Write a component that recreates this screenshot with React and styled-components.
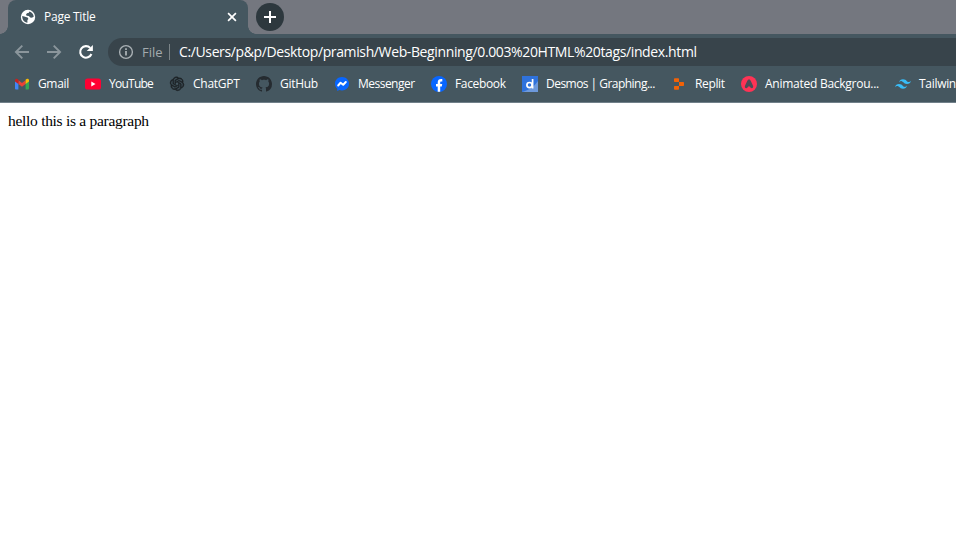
import React from "react";
import styled, { createGlobalStyle } from "styled-components";

const GlobalStyle = createGlobalStyle`
  html, body { margin: 0; padding: 0; background: #fff; overflow: hidden; }
  * { box-sizing: border-box; }
`;

const Window = styled.div`
  width: 100%;
  height: 100vh;
  display: flex;
  flex-direction: column;
  overflow: hidden;
  background: #fff;
  color: #fff;
  font-family: "Open Sans", "Noto Sans", sans-serif;
  font-size: 12px;
`;

const TabStrip = styled.div`
  flex: none;
  height: 34px;
  display: flex;
  align-items: stretch;
  background: #74777f;
`;

const FrameEdge = styled.div`
  width: 8px;
  background: radial-gradient(circle at 0 0, transparent 7.5px, #455760 8px) 0 100% / 8px 8px no-repeat;
  transform: ${(p) => (p.$right ? "scaleX(-1)" : "none")};
`;

const Tab = styled.div`
  width: 240px;
  display: flex;
  align-items: center;
  padding: 0 9px 0 12px;
  background: #455760;
  border-radius: 8px 8px 0 0;
`;

const Text = styled.span`
  display: block;
  flex: none;
  width: ${(p) => (p.$width ? `${p.$width}px` : "auto")};
  line-height: 18px;
  letter-spacing: ${(p) => p.$spacing || 0}px;
  white-space: nowrap;
`;

const TabTitle = styled(Text)`
  margin-left: 8px;
  flex: 1;
`;

const Icon = styled.svg`
  display: block;
  flex: none;
  width: ${(p) => p.$size || 16}px;
  height: ${(p) => p.$size || 16}px;
`;

const NewTab = styled.div`
  align-self: center;
  display: grid;
  place-items: center;
  width: 28px;
  height: 28px;
  border-radius: 50%;
  background: #2d383e;
`;

const Toolbar = styled.div`
  flex: none;
  height: 36px;
  display: flex;
  align-items: center;
  gap: 16px;
  padding-left: 14px;
  background: #455760;
`;

const AddressBar = styled.div`
  flex: 1;
  height: 28px;
  margin-left: -2px;
  display: flex;
  align-items: center;
  padding-left: 10px;
  border-radius: 14px 0 0 14px;
  background: #38444b;
  font-size: 14px;
  white-space: nowrap;
  overflow: hidden;
`;

const Scheme = styled(Text)`
  margin-left: 8px;
  color: #a3aaae;
  font-size: 13px;
`;

const Divider = styled.div`
  width: 1px;
  height: 16px;
  margin-right: 9px;
  background: #7b8488;
`;

const Bookmarks = styled.div`
  flex: none;
  height: 33px;
  display: flex;
  align-items: center;
  padding: 0 0 4px 14px;
  gap: 16px;
  background: #455760;
  border-bottom: 1px solid #71808a;
  overflow: hidden;
`;

const Bookmark = styled.div`
  flex: none;
  display: flex;
  align-items: center;
  gap: 8px;
`;

const Page = styled.main`
  flex: 1;
  padding: 9px 8px;
  color: #000;
  font-family: "Liberation Serif", "Times New Roman", serif;
  font-size: 15.5px;
`;

const Paragraph = styled.p`
  margin: 0;
  line-height: 18px;
  letter-spacing: ${(p) => p.$spacing}px;
`;

const GlobeIcon = () => (
  <Icon viewBox="0 0 16 16">
    <circle cx="8" cy="8" r="7.2" fill="#fff" />
    <path d="M2.2 7 L4.2 7.6 L7.6 8.4 L8.4 10 L7.4 11 V13.7 C4.4 13.4 2.1 10.8 2.2 7 Z" fill="#455760" />
    <path d="M9.3 2.4 L8.9 3.8 L7 4.3 L6 5.4 L6.6 6.8 L8.8 6.9 L10.2 8.6 L11.8 8.8 L13.7 7.8 C13.6 5 12 3 9.3 2.4 Z" fill="#455760" />
  </Icon>
);

const CloseIcon = () => (
  <Icon $size={14} viewBox="0 0 14 14">
    <path d="M3.1 3.1 L10.9 10.9 M10.9 3.1 L3.1 10.9" stroke="#fff" strokeWidth="1.7" />
  </Icon>
);

const PlusIcon = () => (
  <Icon $size={14} viewBox="0 0 14 14">
    <path d="M7 1 V13 M1 7 H13" stroke="#fff" strokeWidth="2" />
  </Icon>
);

const ArrowIcon = ({ forward }) => (
  <Icon viewBox="0 0 16 16">
    <path
      d={forward ? "M1 8 H14 M7.7 1.6 L14.1 8 L7.7 14.4" : "M15 8 H2 M8.3 1.6 L1.9 8 L8.3 14.4"}
      fill="none"
      stroke="#8b969c"
      strokeWidth="1.9"
    />
  </Icon>
);

const ReloadIcon = () => (
  <Icon viewBox="0 0 16 16">
    <path d="M13.4 10 A5.8 5.8 0 1 1 12.2 3.9" fill="none" stroke="#fff" strokeWidth="2.1" />
    <path d="M14.9 0.9 V7.1 H8.7 Z" fill="#fff" />
  </Icon>
);

const InfoIcon = () => (
  <Icon viewBox="0 0 16 16">
    <circle cx="8" cy="8" r="6.4" fill="none" stroke="#a9b0b4" strokeWidth="1.4" />
    <path d="M8 7 V11.5 M8 4.3 V5.9" stroke="#a9b0b4" strokeWidth="1.8" />
  </Icon>
);

const GmailIcon = () => (
  <Icon viewBox="0 0 16 16">
    <path d="M1 4 V12.6 Q1 13.5 2 13.5 H4.4 V6.6 Z" fill="#4285f4" />
    <path d="M15 4 V12.6 Q15 13.5 14 13.5 H11.6 V6.6 Z" fill="#34a853" />
    <path d="M4.4 4.3 L8 7 L11.6 4.3 V8 L8 10.8 L4.4 8 Z" fill="#ea4335" />
    <path d="M1 4.6 C1 2.6 2.9 2.2 4.4 3.7 V8 L1 5.6 Z" fill="#c5221f" />
    <path d="M15 4.6 C15 2.6 13.1 2.2 11.6 3.7 V8 L15 5.6 Z" fill="#fbbc04" />
  </Icon>
);

const YouTubeIcon = () => (
  <Icon viewBox="0 0 16 16">
    <rect x="0" y="2.4" width="16" height="11.2" rx="2.6" fill="#ff0033" />
    <path d="M6.3 5.6 V10.4 L10.5 8 Z" fill="#fff" />
  </Icon>
);

const ChatGPTIcon = () => (
  <Icon viewBox="0 0 24 24">
    <path
      fill="#1d2326"
      d="M22.2819 9.8211a5.9847 5.9847 0 0 0-.5157-4.9108 6.0462 6.0462 0 0 0-6.5098-2.9A6.0651 6.0651 0 0 0 4.9807 4.1818a5.9847 5.9847 0 0 0-3.9977 2.9 6.0462 6.0462 0 0 0 .7427 7.0966 5.98 5.98 0 0 0 .511 4.9107 6.051 6.051 0 0 0 6.5146 2.9001A5.9847 5.9847 0 0 0 13.2599 24a6.0557 6.0557 0 0 0 5.7718-4.2058 5.9894 5.9894 0 0 0 3.9977-2.9001 6.0557 6.0557 0 0 0-.7475-7.0729zm-9.022 12.6081a4.4755 4.4755 0 0 1-2.8764-1.0408l.1419-.0804 4.7783-2.7582a.7948.7948 0 0 0 .3927-.6813v-6.7369l2.02 1.1686a.071.071 0 0 1 .038.052v5.5826a4.504 4.504 0 0 1-4.4945 4.4944zm-9.6607-4.1254a4.4708 4.4708 0 0 1-.5346-3.0137l.142.0852 4.783 2.7582a.7712.7712 0 0 0 .7806 0l5.8428-3.3685v2.3324a.0804.0804 0 0 1-.0332.0615L9.74 19.9502a4.4992 4.4992 0 0 1-6.1408-1.6464zM2.3408 7.8956a4.485 4.485 0 0 1 2.3655-1.9728V11.6a.7664.7664 0 0 0 .3879.6765l5.8144 3.3543-2.0201 1.1685a.0757.0757 0 0 1-.071 0l-4.8303-2.7865A4.504 4.504 0 0 1 2.3408 7.872zm16.5963 3.8558L13.1038 8.364 15.1192 7.2a.0757.0757 0 0 1 .071 0l4.8303 2.7913a4.4944 4.4944 0 0 1-.6765 8.1042v-5.6772a.79.79 0 0 0-.407-.667zm2.0107-3.0231l-.142-.0852-4.7735-2.7818a.7759.7759 0 0 0-.7854 0L9.409 9.2297V6.8974a.0662.0662 0 0 1 .0284-.0615l4.8303-2.7866a4.4992 4.4992 0 0 1 6.6802 4.66zM8.3065 12.863l-2.02-1.1638a.0804.0804 0 0 1-.038-.0567V6.0742a4.4992 4.4992 0 0 1 7.3757-3.4537l-.142.0805L8.704 5.459a.7948.7948 0 0 0-.3927.6813zm1.0976-2.3654l2.602-1.4998 2.6069 1.4998v2.9994l-2.5974 1.4997-2.6067-1.4997Z"
      stroke="#1d2326"
      strokeWidth="0.9"
      transform="translate(1.6 1.2) scale(0.87)"
    />
  </Icon>
);

const GitHubIcon = () => (
  <Icon viewBox="0 0 16 16">
    <path
      fill="#252b30"
      d="M8 0C3.58 0 0 3.58 0 8c0 3.54 2.29 6.53 5.47 7.59.4.07.55-.17.55-.38 0-.19-.01-.82-.01-1.49-2.01.37-2.53-.49-2.69-.94-.09-.23-.48-.94-.82-1.13-.28-.15-.68-.52-.01-.53.63-.01 1.08.58 1.23.82.72 1.21 1.87.87 2.33.66.07-.52.28-.87.51-1.07-1.78-.2-3.64-.89-3.64-3.95 0-.87.31-1.59.82-2.15-.08-.2-.36-1.02.08-2.12 0 0 .67-.21 2.2.82.64-.18 1.32-.27 2-.27s1.36.09 2 .27c1.53-1.04 2.2-.82 2.2-.82.44 1.1.16 1.92.08 2.12.51.56.82 1.27.82 2.15 0 3.07-1.87 3.75-3.65 3.95.29.25.54.73.54 1.48 0 1.07-.01 1.93-.01 2.2 0 .21.15.46.55.38A8.01 8.01 0 0 0 16 8c0-4.42-3.58-8-8-8z"
    />
  </Icon>
);

const MessengerIcon = () => (
  <Icon viewBox="0 0 16 16">
    <path d="M8 1 C3.9 1 1 3.9 1 7.7 C1 9.8 1.8 11.5 3.2 12.7 V15 L5.4 14.1 C6.2 14.3 7.1 14.4 8 14.4 C12.1 14.4 15 11.5 15 7.7 C15 3.9 12.1 1 8 1 Z" fill="#0866ff" />
    <path d="M4.2 9.5 L6.6 6.7 L9.2 8.7 L11.8 6" fill="none" stroke="#fff" strokeWidth="2" strokeLinejoin="round" strokeLinecap="round" />
  </Icon>
);

const FacebookIcon = () => (
  <Icon viewBox="0 0 16 16">
    <circle cx="8" cy="8" r="8" fill="#0866ff" />
    <path d="M6.7 15.8 V10.4 H5 V7.9 H6.7 V6.8 C6.7 4 8 3 10.2 3 L11.3 3.1 V5.4 H10.3 C9.4 5.4 9.2 5.9 9.2 6.7 V7.9 H11.2 L10.8 10.4 H9.2 V15.8 Z" fill="#fff" />
  </Icon>
);

const DesmosIcon = () => (
  <Icon viewBox="0 0 16 16">
    <rect width="16" height="16" fill="#2f72dc" />
    <path d="M16 5 V16 H0 C7 14 12 11 16 5 Z" fill="#6d99dc" />
    <circle cx="7.5" cy="9.1" r="2.6" fill="none" stroke="#fff" strokeWidth="1.7" />
    <path d="M10.6 3 V12.5" stroke="#fff" strokeWidth="1.7" />
  </Icon>
);

const ReplitIcon = () => (
  <Icon viewBox="0 0 16 16">
    <path
      d="M3.7 2.2 H7.3 Q8 2.2 8 2.9 V6 H3.7 Q3 6 3 5.3 V2.9 Q3 2.2 3.7 2.2 Z M8 6 H12.3 Q13 6 13 6.7 V9.3 Q13 10 12.3 10 H8 Z M3.7 10 H8 V13.1 Q8 13.8 7.3 13.8 H3.7 Q3 13.8 3 13.1 V10.7 Q3 10 3.7 10 Z"
      fill="#f26207"
    />
  </Icon>
);

const AnimatedIcon = () => (
  <Icon viewBox="0 0 16 16">
    <circle cx="8" cy="8" r="8" fill="#ff3355" />
    <path d="M8 3.4 C9 3.4 9.4 4 9.8 4.9 L12 9.8 C12.8 11.8 10.9 12.9 9.5 11.6 L8 10.1 L6.5 11.6 C5.1 12.9 3.2 11.8 4 9.8 L6.2 4.9 C6.6 4 7 3.4 8 3.4 Z" fill="#4b4d58" />
  </Icon>
);

const TailwindIcon = () => (
  <Icon viewBox="0 0 24 24">
    <path
      fill="#38bdf8"
      d="M12.001,4.8c-3.2,0-5.2,1.6-6,4.8c1.2-1.6,2.6-2.2,4.2-1.8c0.913,0.228,1.565,0.89,2.288,1.624C13.666,10.618,15.027,12,18.001,12c3.2,0,5.2-1.6,6-4.8c-1.2,1.6-2.6,2.2-4.2,1.8c-0.913-0.228-1.565-0.89-2.288-1.624C16.337,6.182,14.976,4.8,12.001,4.8z M6.001,12c-3.2,0-5.2,1.6-6,4.8c1.2-1.6,2.6-2.2,4.2-1.8c0.913,0.228,1.565,0.89,2.288,1.624c1.177,1.194,2.538,2.576,5.512,2.576c3.2,0,5.2-1.6,6-4.8c-1.2,1.6-2.6,2.2-4.2,1.8c-0.913-0.228-1.565-0.89-2.288-1.624C10.337,13.382,8.976,12,6.001,12z"
    />
  </Icon>
);

const BOOKMARKS = [
  { name: "Gmail", icon: GmailIcon, width: 31, spacing: -0.35 },
  { name: "YouTube", icon: YouTubeIcon, width: 44, spacing: -0.75 },
  { name: "ChatGPT", icon: ChatGPTIcon, width: 47, spacing: -0.25 },
  { name: "GitHub", icon: GitHubIcon, width: 38, spacing: -0.3 },
  { name: "Messenger", icon: MessengerIcon, width: 57, spacing: -0.52 },
  { name: "Facebook", icon: FacebookIcon, width: 51, spacing: -0.35 },
  { name: "Desmos | Graphing...", icon: DesmosIcon, width: 109, spacing: -0.53 },
  { name: "Replit", icon: ReplitIcon, width: 30, spacing: -0.35 },
  { name: "Animated Backgrou...", icon: AnimatedIcon, width: 114, spacing: -0.26 },
  { name: "Tailwin", icon: TailwindIcon, width: 37, spacing: -0.3 },
];

export default function App() {
  return (
    <Window>
      <GlobalStyle />
      <TabStrip>
        <FrameEdge />
        <Tab>
          <GlobeIcon />
          <TabTitle $spacing={-0.25}>Page Title</TabTitle>
          <CloseIcon />
        </Tab>
        <FrameEdge $right />
        <NewTab>
          <PlusIcon />
        </NewTab>
      </TabStrip>
      <Toolbar>
        <ArrowIcon />
        <ArrowIcon forward />
        <ReloadIcon />
        <AddressBar>
          <InfoIcon />
          <Scheme $width={27}>File</Scheme>
          <Divider />
          <Text $spacing={-0.375}>C:/Users/p&amp;p/Desktop/pramish/Web-Beginning/0.003%20HTML%20tags/index.html</Text>
        </AddressBar>
      </Toolbar>
      <Bookmarks>
        {BOOKMARKS.map(({ name, icon: Glyph, width, spacing }) => (
          <Bookmark key={name}>
            <Glyph />
            <Text $width={width} $spacing={spacing}>{name}</Text>
          </Bookmark>
        ))}
      </Bookmarks>
      <Page>
        <Paragraph $spacing={-0.29}>hello this is a paragraph</Paragraph>
      </Page>
    </Window>
  );
}
